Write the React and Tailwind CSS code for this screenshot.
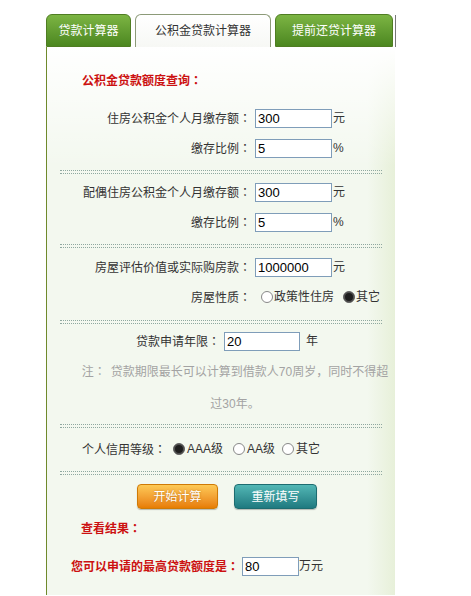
import React from 'react';

// full-width colon centred in its box, as in the reference
const C = () => <span className="font-['Noto_Sans_CJK_TC',sans-serif]">：</span>;

const Input = ({ value, w = 'w-[77px]', className = '' }) => (
  <div className={`${w} h-[19px] shrink-0 border border-[#7f9db9] bg-white flex items-center pl-[2px] text-[13px] leading-none text-black ${className}`}>
    {value}
  </div>
);

const Radio = ({ on }) => (
  <span
    className={`inline-block w-[12px] h-[12px] rounded-full border ${
      on ? 'bg-[#1e1e1e] border-[#666] shadow-[inset_0_0_0_1px_#555]' : 'bg-white border-[#888]'
    }`}
  />
);

const Sep = ({ className = '' }) => (
  <div className={`mx-[13px] h-[4px] border-t border-b border-dotted border-[#8fa8a0] ${className}`} />
);

const Row = ({ label, value, unit, className = '' }) => (
  <div className={`h-[30px] flex items-center ${className}`}>
    <div className="w-[204px] text-right text-[#333]">
      {label}
      <C />
    </div>
    <Input value={value} className="ml-[4px]" />
    <span className="ml-[1px] text-[#333]">{unit}</span>
  </div>
);

export default function App() {
  const tabGreen =
    'h-[33px] flex items-center justify-center rounded-t-[6px] border border-[#4f7d22] bg-linear-to-b from-[#7cb543] to-[#4c8720] text-white';

  return (
    <div className="w-[471px] h-[596px] bg-white pl-[46px] pt-[14px] text-[12px] font-['Liberation_Sans','Noto_Sans_CJK_SC',sans-serif]">
      {/* tabs */}
      <div className="flex items-end">
        <div className={`${tabGreen} w-[85px]`}>贷款计算器</div>
        <div className="ml-[4px] w-[136px] h-[33px] flex items-center justify-center rounded-t-[6px] border border-b-0 border-[#8c9a78] bg-linear-to-b from-white to-[#f7f8f5] text-[#333]">
          公积金贷款计算器
        </div>
        <div className={`${tabGreen} ml-[4px] w-[118px]`}>提前还贷计算器</div>
        <div className="ml-[2px] w-[2px] h-[32px] border-l border-[#777]" />
      </div>

      {/* panel */}
      <div className="w-[349px] border-l border-[#6f8a2c] bg-[linear-gradient(to_right,#f3f8ef_92%,#e7f0d9)]">
        <div className="bg-[linear-gradient(to_bottom,#ffffff,rgba(255,255,255,0)_120px)] pt-[25px] pb-[19px]">
          <div className="h-[16px] leading-[16px] pl-[35px] font-bold text-[#cc1111]">
            公积金贷款额度查询<C />
          </div>

          <Row className="mt-[15px]" label="住房公积金个人月缴存额" value="300" unit="元" />
          <Row label="缴存比例" value="5" unit="%" />

          <Sep className="mt-[7px]" />

          <Row className="mt-[3px]" label="配偶住房公积金个人月缴存额" value="300" unit="元" />
          <Row label="缴存比例" value="5" unit="%" />

          <Sep className="mt-[7px]" />

          <Row className="mt-[4px]" label="房屋评估价值或实际购房款" value="1000000" unit="元" />
          <div className="h-[30px] flex items-center text-[#333]">
            <div className="w-[204px] text-right">
              房屋性质<C />
            </div>
            <span className="ml-[10px] flex items-center">
              <Radio />
              <span className="ml-[1px]">政策性住房</span>
            </span>
            <span className="ml-[9px] flex items-center">
              <Radio on />
              <span className="ml-[1px]">其它</span>
            </span>
          </div>

          <Sep className="mt-[8px]" />

          <div className="mt-[3px] h-[28px] flex items-center text-[#333]">
            <div className="w-[173px] text-right">
              贷款申请年限<C />
            </div>
            <Input value="20" w="w-[76px]" className="ml-[4px]" />
            <span className="ml-[6px]">年</span>
          </div>

          <div className="pl-[28px] text-center leading-[32px] text-[#a3a3a3]">
            注<C />
            <span className="ml-[5px]">贷款期限最长可以计算到借款人70周岁，同时不得超</span>
            <br />
            过30年。
          </div>

          <Sep className="mt-[4px]" />

          <div className="mt-[6px] h-[30px] flex items-center pl-[35px] text-[#333]">
            <span>
              个人信用等级<C />
            </span>
            <span className="ml-[7px] flex items-center">
              <Radio on />
              <span className="ml-[2px]">AAA级</span>
            </span>
            <span className="ml-[10px] flex items-center">
              <Radio />
              <span className="ml-[2px]">AA级</span>
            </span>
            <span className="ml-[7px] flex items-center">
              <Radio />
              <span className="ml-[2px]">其它</span>
            </span>
          </div>

          <Sep className="mt-[7px]" />

          <div className="mt-[9px] flex pl-[90px]">
            <button className="w-[81px] h-[25px] rounded-[4px] border border-[#cf7a06] bg-linear-to-b from-[#fdc955] to-[#e77d00] text-white text-[12px] [text-shadow:0_0_2px_rgba(150,80,0,0.6)] shadow-[0_1px_1px_rgba(0,0,0,0.25)]">
              开始计算
            </button>
            <button className="ml-[16px] w-[83px] h-[25px] rounded-[4px] border border-[#1d6c70] bg-linear-to-b from-[#52b7b5] to-[#1f7a80] text-white text-[12px] shadow-[0_1px_1px_rgba(0,0,0,0.25)]">
              重新填写
            </button>
          </div>

          <div className="mt-[11px] h-[16px] leading-[16px] pl-[34px] font-bold text-[#cc1111]">
            查看结果<C />
          </div>

          <div className="mt-[20px] h-[20px] flex items-center pl-[24px]">
            <span className="shrink-0 whitespace-nowrap font-bold text-[#cc1111]">
              您可以申请的最高贷款额度是<C />
            </span>
            <Input value="80" w="w-[57px]" className="ml-[3px]" />
            <span className="text-[#333]">万元</span>
          </div>
        </div>
      </div>
    </div>
  );
}
